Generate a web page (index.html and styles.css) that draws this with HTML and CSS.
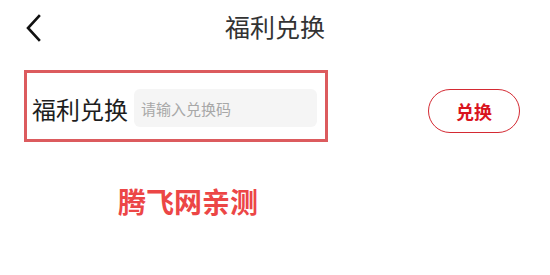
FILE: index.html
```html
<!doctype html>
<html lang="zh-CN">
<head>
  <meta charset="utf-8">
  <title>福利兑换</title>
  <meta name="viewport" content="width=device-width, initial-scale=1">
  <link rel="stylesheet" href="styles.css">
</head>
<body>
  <header class="top-bar">
    <a class="back" href="#" aria-label="返回">
      <svg width="16" height="28" viewBox="0 0 16 28">
        <path d="M14 2 L3 14 L14 26" fill="none" stroke="#111" stroke-width="2.6" stroke-linecap="square"/>
      </svg>
    </a>
    <h1>福利兑换</h1>
    <span></span>
  </header>

  <section class="redeem-row">
    <div class="redeem-box">
      <label for="code">福利兑换</label>
      <input type="text" id="code" placeholder="请输入兑换码">
    </div>
    <button class="redeem-btn" type="button">兑换</button>
  </section>

  <p class="mark">腾飞网亲测</p>
</body>
</html>
```

FILE: styles.css
```css
body {
  margin: 0;
  background: #fff;
  font-family: "Noto Sans CJK SC", "Noto Sans", sans-serif;
  color: #222;
}

.top-bar {
  display: grid;
  grid-template-columns: 1fr auto 1fr;
  align-items: center;
  height: 56px;
}
.back {
  display: flex;
  padding-left: 25px;
}
.top-bar h1 {
  margin: 0 0 3px 0;
  font-size: 25px;
  font-weight: 400;
  color: #333;
  line-height: 25px;
}
.top-bar span {
  width: 4px;
}

.redeem-row {
  display: flex;
  align-items: flex-start;
  margin-top: 14px;
}
.redeem-box {
  display: flex;
  align-items: center;
  box-sizing: border-box;
  width: 304px;
  height: 72px;
  margin-left: 24px;
  padding: 0 8px 0 5px;
  border: 3px solid #dc5b5e;
  gap: 6px;
}
.redeem-box label {
  font-size: 24px;
  color: #1e1e1e;
  white-space: nowrap;
  margin-top: 4px;
}
.redeem-box input {
  flex: 1;
  min-width: 0;
  height: 38px;
  margin-top: 4px;
  box-sizing: border-box;
  border: none;
  border-radius: 6px;
  background: #f5f5f5;
  padding: 0 7px;
  font-family: inherit;
  font-size: 15px;
  outline: none;
}
.redeem-box input::placeholder {
  color: #a8a8a8;
}

.redeem-btn {
  margin: 19px 30px 0 auto;
  width: 92px;
  height: 44px;
  border: 1.5px solid #d42a33;
  border-radius: 22px;
  background: #fff;
  color: #d9141e;
  font-family: inherit;
  font-size: 18px;
  font-weight: 700;
  padding: 0;
}

.mark {
  margin: 43px 0 0 118px;
  font-size: 28px;
  font-weight: 700;
  color: #ec4646;
  line-height: 32px;
}
```
